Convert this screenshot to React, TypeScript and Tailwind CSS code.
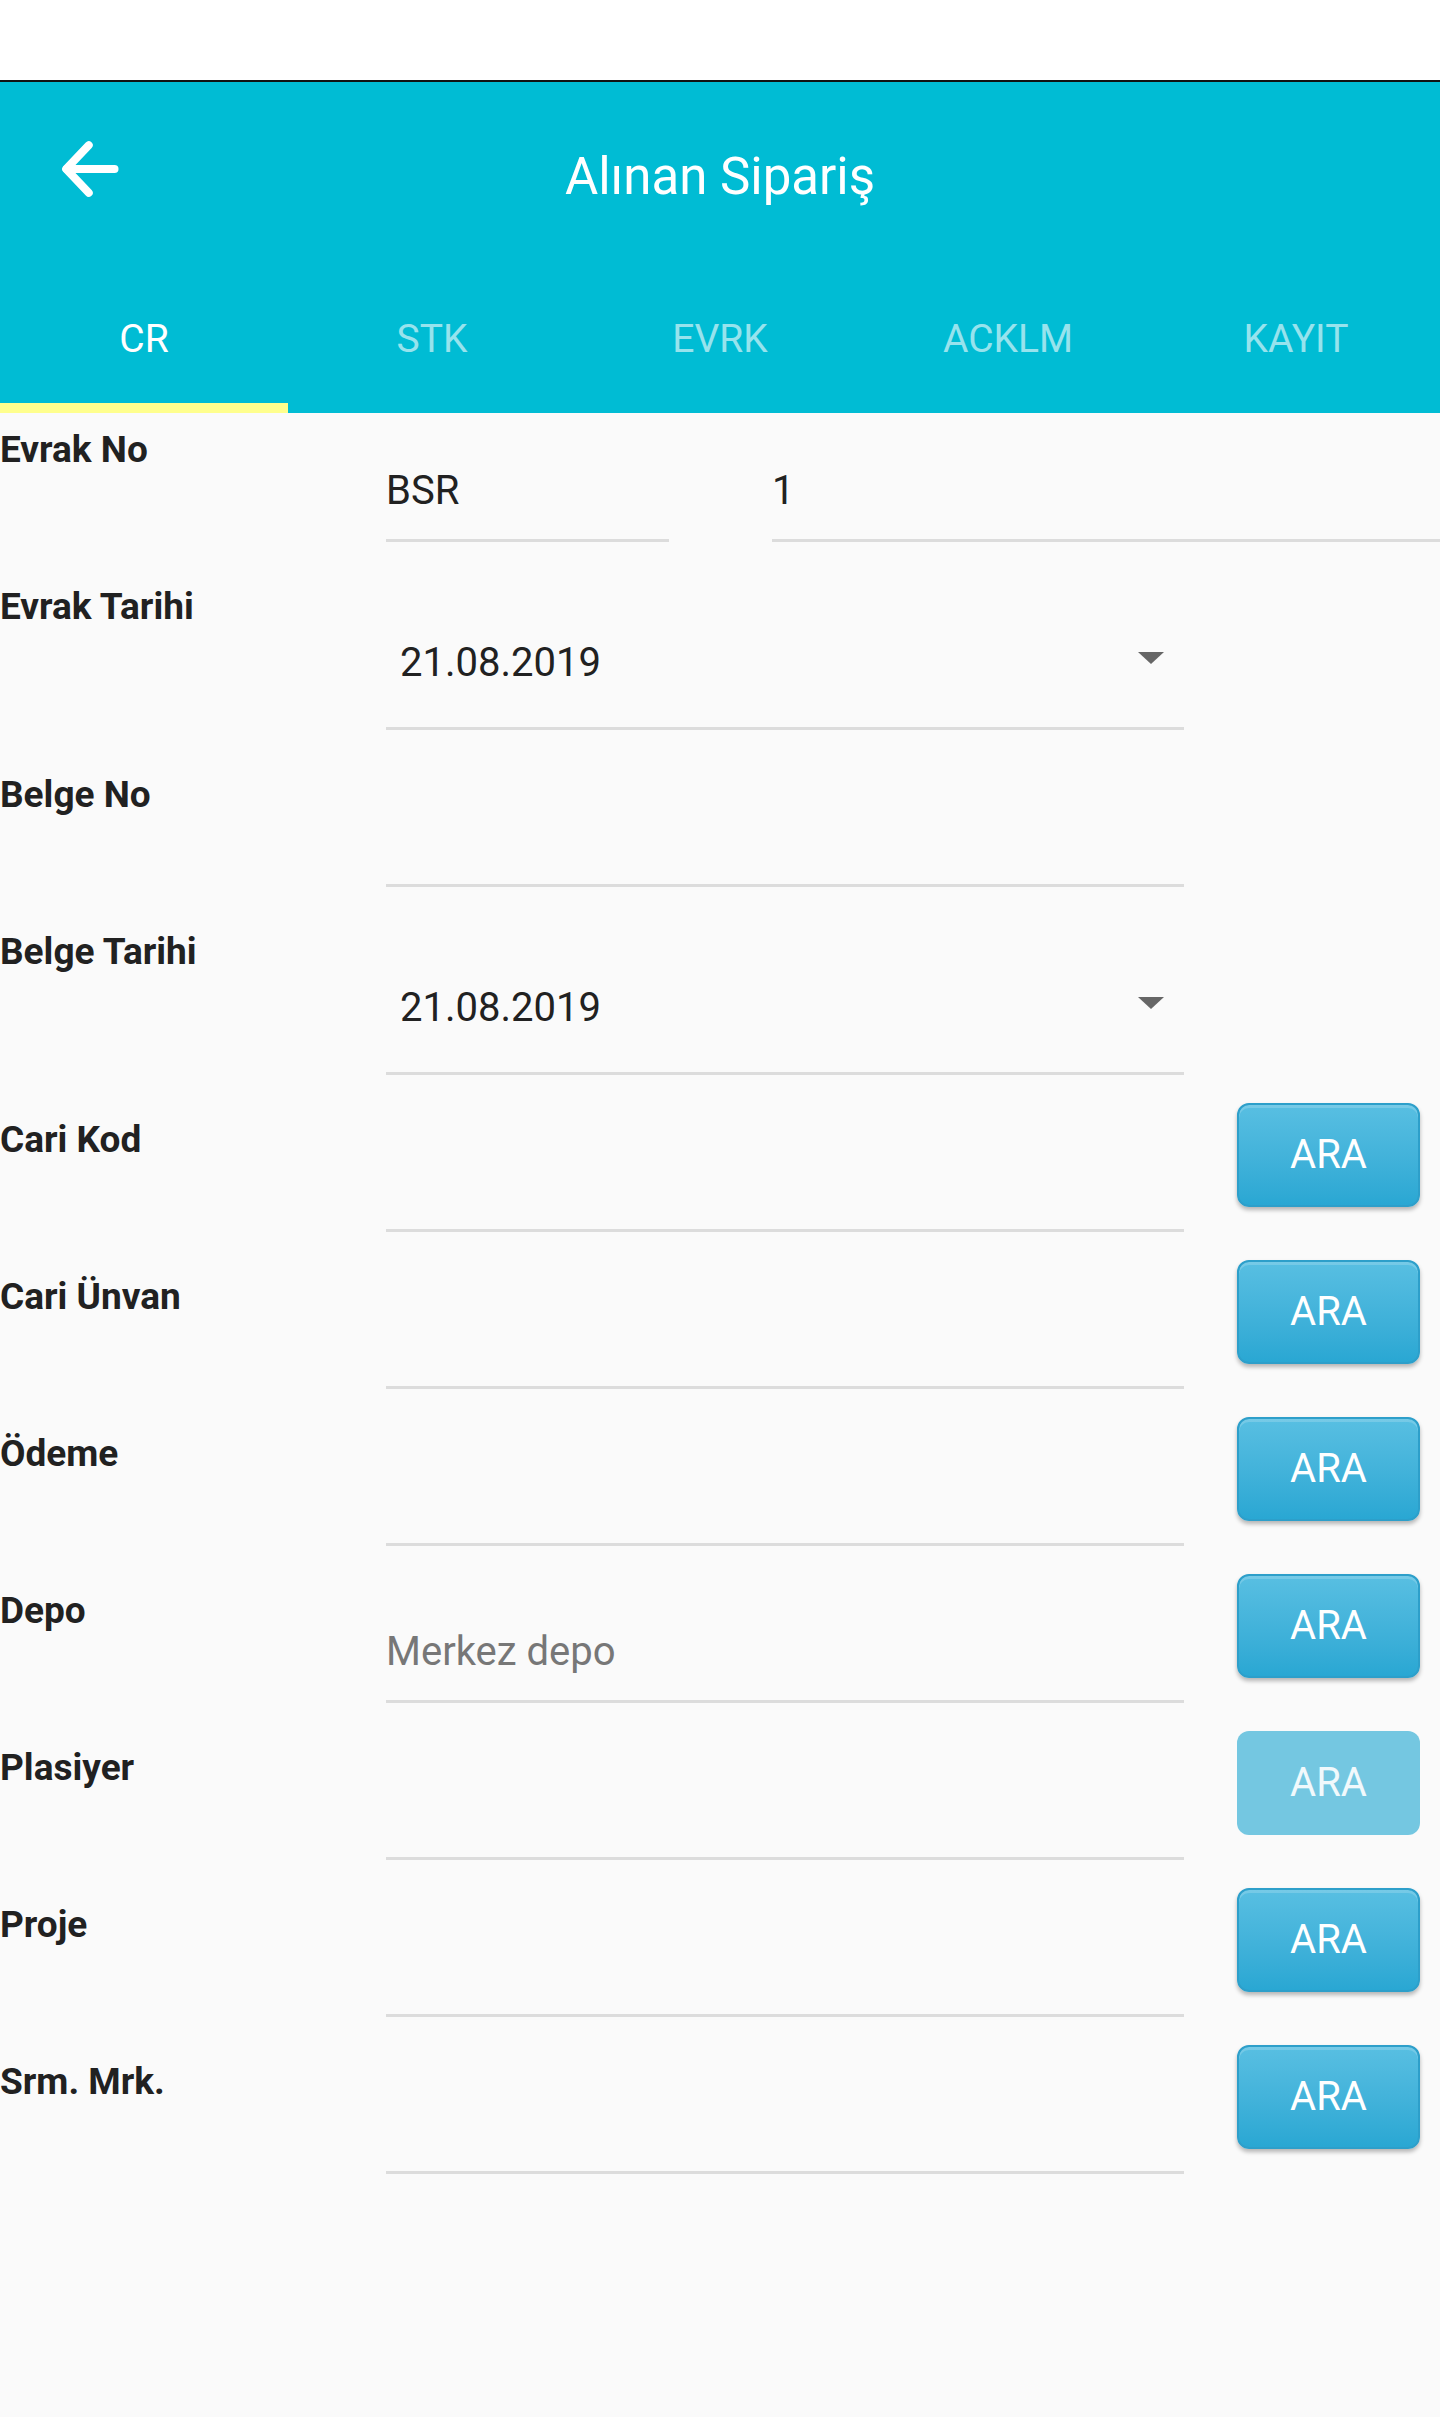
import React from 'react';

const tabs = ['CR', 'STK', 'EVRK', 'ACKLM', 'KAYIT'];

type Field = {
  label: string;
  kind: 'text' | 'date';
  value?: string;
  muted?: boolean;
  button?: 'on' | 'off';
};

const fields: Field[] = [
  { label: 'Evrak Tarihi', kind: 'date', value: '21.08.2019' },
  { label: 'Belge No', kind: 'text' },
  { label: 'Belge Tarihi', kind: 'date', value: '21.08.2019' },
  { label: 'Cari Kod', kind: 'text', button: 'on' },
  { label: 'Cari Ünvan', kind: 'text', button: 'on' },
  { label: 'Ödeme', kind: 'text', button: 'on' },
  { label: 'Depo', kind: 'text', value: 'Merkez depo', muted: true, button: 'on' },
  { label: 'Plasiyer', kind: 'text', button: 'off' },
  { label: 'Proje', kind: 'text', button: 'on' },
  { label: 'Srm. Mrk.', kind: 'text', button: 'on' },
];

const BackArrow = () => (
  <svg viewBox="3 3 18 18" className="w-[58px] h-[58px]" fill="none" stroke="white" strokeWidth={2.5} strokeLinecap="round" strokeLinejoin="round">
    <path d="M19.6 12H4.8" />
    <path d="M11.6 4.6L4.6 12l7 7.4" />
  </svg>
);

const AraButton = ({ disabled }: { disabled?: boolean }) =>
  disabled ? (
    <button className="ml-[53px] w-[183px] h-[104px] shrink-0 rounded-[12px] bg-[#74c7e1] text-[40px] leading-none text-white/90">
      ARA
    </button>
  ) : (
    <button className="ml-[53px] w-[183px] h-[104px] shrink-0 rounded-[12px] border-2 border-[#2d9fca] bg-gradient-to-b from-[#58bfe2] to-[#29a7d3] text-[40px] leading-none text-white shadow-[0_3px_4px_rgba(0,0,0,0.28),inset_0_3px_0_rgba(255,255,255,0.18)]">
      ARA
    </button>
  );

const App: React.FC = () => {
  return (
    <div className="min-h-[2417px] w-[1440px] bg-[#fafafa] font-['Roboto',sans-serif] text-[#212121]">
      <div className="h-[82px] bg-white border-b-2 border-[#111]" />

      <header className="bg-[#00bcd4] text-white">
        <div className="h-[183px] grid grid-cols-[1fr_auto_1fr] items-start">
          <div className="ml-[61px] mt-[58px]">
            <BackArrow />
          </div>
          <h1 className="mt-[69px] text-[51px] leading-none font-normal">Alınan Sipariş</h1>
          <div />
        </div>
        <div className="flex h-[148px]">
          {tabs.map((t, i) => (
            <div key={t} className="flex-1 flex flex-col">
              <div className={`flex-1 pt-[55px] text-center text-[39px] leading-none ${i === 0 ? 'text-white' : 'text-white/60'}`}>
                {t}
              </div>
              <div className={`h-[10px] ${i === 0 ? 'bg-[#ffff8d]' : ''}`} />
            </div>
          ))}
        </div>
      </header>

      <main>
        {/* Evrak No: seri + sira */}
        <div className="flex items-start mb-[28px]">
          <div className="w-[386px] shrink-0 pt-[18px] text-[37px] font-bold leading-none">Evrak No</div>
          <div className="w-[283px] h-[129px] border-b-[3px] border-[#dcdcdc] pt-[58px] text-[40px] leading-none">BSR</div>
          <div className="ml-[103px] flex-1 h-[129px] border-b-[3px] border-[#dcdcdc] pt-[58px] text-[40px] leading-none">1</div>
        </div>

        {fields.map((f) => (
          <div key={f.label} className="flex items-start mb-[28px]">
            <div className="w-[386px] shrink-0 pt-[18px] text-[37px] font-bold leading-none">{f.label}</div>
            {f.kind === 'date' ? (
              <div className="w-[798px] shrink-0 h-[160px] border-b-[3px] border-[#dcdcdc] pt-[73px] pl-[14px] pr-[20px] flex items-start justify-between">
                <span className="text-[40px] leading-none">{f.value}</span>
                <svg viewBox="0 0 26 12" className="mt-[9px] w-[26px] h-[12px]">
                  <path d="M0 0h26L13 12z" fill="#666" />
                </svg>
              </div>
            ) : (
              <div className={`w-[798px] shrink-0 h-[129px] border-b-[3px] border-[#dcdcdc] pt-[58px] text-[40px] leading-none ${f.muted ? 'text-[#777]' : ''}`}>
                {f.value}
              </div>
            )}
            {f.button && <AraButton disabled={f.button === 'off'} />}
          </div>
        ))}
      </main>
    </div>
  );
};

export default App;
